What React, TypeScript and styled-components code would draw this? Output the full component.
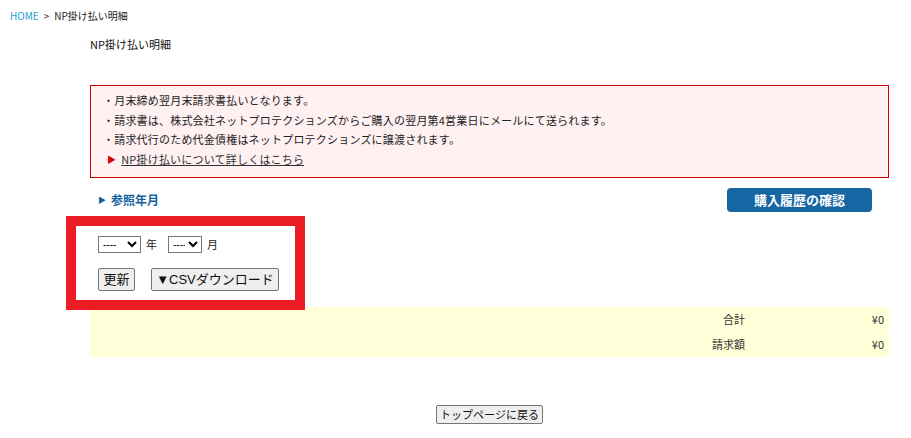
import React from "react";
import styled, { createGlobalStyle } from "styled-components";

const GlobalStyle = createGlobalStyle`
  html, body { margin: 0; padding: 0; background: #fff; }
  body {
    font-family: "Noto Sans CJK JP", "Noto Sans", sans-serif;
    color: #222;
  }
`;

const Page = styled.div`
  width: 911px;
  height: 438px;
  overflow: hidden;
  position: relative;
`;

const Breadcrumb = styled.nav`
  display: flex;
  align-items: center;
  gap: 5px;
  padding: 8px 0 0 10px;
  height: 16px;
  font-size: 10px;
  line-height: 16px;
  color: #222;
`;

const HomeLink = styled.a`
  color: #22a0d8;
  text-decoration: none;
`;

const Content = styled.main`
  width: 799px;
  margin-left: 90px;
  display: flex;
  flex-direction: column;
`;

const Title = styled.h1`
  margin: 12px 0 0;
  font-size: 11px;
  font-weight: normal;
  line-height: 16px;
  color: #111;
`;

const Notice = styled.div`
  margin-top: 33px;
  border: 1px solid #cc0000;
  background: #fff0f2;
  padding: 5px 12px 7px 12px;
  display: flex;
  flex-direction: column;
`;

const NoticeLine = styled.p`
  margin: 0;
  font-size: 11px;
  letter-spacing: 0.2px;
  line-height: 19.7px;
  color: #222;
`;

const DetailLine = styled.p`
  margin: 0;
  padding-left: 4px;
  font-size: 11px;
  letter-spacing: 0.2px;
  line-height: 19.7px;
  display: flex;
  align-items: center;
  gap: 5px;
`;

const RedArrow = styled.span`
  color: #d40000;
  font-size: 9px;
`;

const DetailLink = styled.a`
  color: #333;
  text-decoration: underline;
`;

const SectionBar = styled.div`
  margin-top: 10px;
  display: flex;
  align-items: center;
  justify-content: space-between;
  padding: 0 17px 0 8px;
  height: 24px;
`;

const SectionLabel = styled.h2`
  margin: 0;
  font-size: 12px;
  font-weight: bold;
  color: #13629e;
  display: flex;
  align-items: center;
  gap: 5px;
  line-height: 16px;
`;

const SmallTriangle = styled.span`
  font-size: 8px;
`;

const HistoryButton = styled.button`
  width: 145px;
  height: 24px;
  border: none;
  border-radius: 4px;
  background: #1566a3;
  color: #fff;
  font-family: inherit;
  font-size: 13px;
  font-weight: bold;
  line-height: 24px;
  padding: 0;
`;

const FilterForm = styled.form`
  position: relative;
  margin-top: 24px;
  padding-left: 8px;
  display: flex;
  flex-direction: column;
  gap: 15px;
  height: 78px;
`;

const FieldRow = styled.div`
  display: flex;
  align-items: center;
  gap: 5px;
  font-size: 11px;
  height: 17px;
`;

const Unit = styled.span<{ $gap?: number }>`
  margin-right: ${(p) => p.$gap ?? 0}px;
  line-height: 17px;
`;

const Select = styled.select<{ $w: number }>`
  width: ${(p) => p.$w}px;
  height: 17px;
  font-size: 10px;
  font-family: "Liberation Sans", sans-serif;
  border: 1px solid #767676;
  border-radius: 0;
  background: #fff;
  padding: 0;
  margin: 0;
`;

const ButtonRow = styled.div`
  display: flex;
  align-items: center;
  gap: 16px;
`;

const FormButton = styled.button<{ $w: number }>`
  width: ${(p) => p.$w}px;
  height: 23px;
  background: #efefef;
  border: 1px solid #767676;
  border-radius: 2px;
  font-family: "Liberation Sans", "Noto Sans CJK JP", sans-serif;
  font-size: 13px;
  color: #111;
  padding: 0;
  margin: 0;
  line-height: 21px;
`;

const Highlight = styled.div`
  position: absolute;
  left: -24px;
  top: -20px;
  width: 239px;
  height: 94px;
  box-sizing: border-box;
  border: 10px solid #ec1c24;
  pointer-events: none;
`;

const Summary = styled.div`
  margin-top: -7px;
  background: #ffffd9;
  display: grid;
  grid-template-columns: 1fr 144px;
`;

const SummaryLabel = styled.div`
  height: 25px;
  line-height: 25px;
  text-align: right;
  font-size: 11px;
  color: #333;
`;

const SummaryValue = styled.div`
  height: 25px;
  line-height: 25px;
  text-align: right;
  font-size: 11px;
  color: #333;
  padding-right: 5px;
`;

const BackRow = styled.div`
  margin-top: 48px;
  display: flex;
  justify-content: center;
`;

const BackButton = styled.button`
  width: 107px;
  height: 19px;
  background: #efefef;
  border: 1px solid #767676;
  border-radius: 2px;
  font-family: "Noto Sans CJK JP", sans-serif;
  font-size: 11px;
  color: #111;
  padding: 0;
  line-height: 17px;
`;

export default function App() {
  return (
    <Page>
      <GlobalStyle />
      <Breadcrumb>
        <HomeLink href="#">HOME</HomeLink>
        <span>&gt;</span>
        <span>NP掛け払い明細</span>
      </Breadcrumb>
      <Content>
        <Title>NP掛け払い明細</Title>
        <Notice>
          <NoticeLine>・月末締め翌月末請求書払いとなります。</NoticeLine>
          <NoticeLine>
            ・請求書は、株式会社ネットプロテクションズからご購入の翌月第4営業日にメールにて送られます。
          </NoticeLine>
          <NoticeLine>・請求代行のため代金債権はネットプロテクションズに譲渡されます。</NoticeLine>
          <DetailLine>
            <RedArrow>▶</RedArrow>
            <DetailLink href="#">NP掛け払いについて詳しくはこちら</DetailLink>
          </DetailLine>
        </Notice>
        <SectionBar>
          <SectionLabel>
            <SmallTriangle>▶</SmallTriangle>参照年月
          </SectionLabel>
          <HistoryButton type="button">購入履歴の確認</HistoryButton>
        </SectionBar>
        <FilterForm>
          <FieldRow>
            <Select $w={43} defaultValue="">
              <option value="">----</option>
              <option value="2024">2024</option>
            </Select>
            <Unit $gap={6}>年</Unit>
            <Select $w={34} defaultValue="">
              <option value="">----</option>
              <option value="1">1</option>
            </Select>
            <Unit>月</Unit>
          </FieldRow>
          <ButtonRow>
            <FormButton type="button" $w={37}>更新</FormButton>
            <FormButton type="button" $w={128}>▼CSVダウンロード</FormButton>
          </ButtonRow>
          <Highlight />
        </FilterForm>
        <Summary>
          <SummaryLabel>合計</SummaryLabel>
          <SummaryValue>¥0</SummaryValue>
          <SummaryLabel>請求額</SummaryLabel>
          <SummaryValue>¥0</SummaryValue>
        </Summary>
        <BackRow>
          <BackButton type="button">トップページに戻る</BackButton>
        </BackRow>
      </Content>
    </Page>
  );
}
